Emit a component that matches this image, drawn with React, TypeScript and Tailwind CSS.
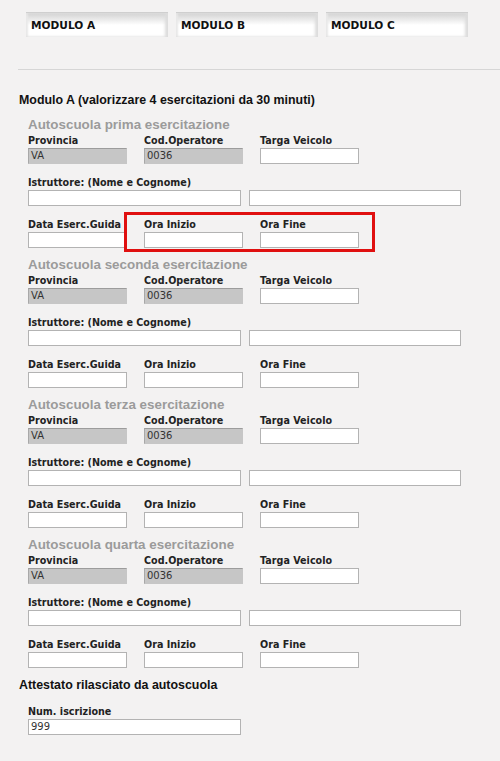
import React from 'react';

const labelCls = "block text-[9.6px] leading-[12px] font-bold text-[#222] font-['DejaVu_Sans',Verdana,sans-serif]";

function Field({ label, value, gray, w = "w-[99px]" }: { label?: string; value?: string; gray?: boolean; w?: string }) {
  return (
    <div className={w}>
      {label !== undefined && <span className={labelCls}>{label}</span>}
      <div
        className={
          "mt-[1px] h-[16px] px-[2px] text-[10px] leading-[14px] text-[#333] font-['DejaVu_Sans',Verdana,sans-serif] " +
          (gray
            ? "bg-[#c6c6c6] border border-[#c6c6c6] border-t-[#9c9c9c] border-l-[#a8a8a8]"
            : "bg-white border border-[#b3b3b3]")
        }
      >
        {value}
      </div>
    </div>
  );
}

function Section({ title, highlight }: { title: string; highlight?: boolean }) {
  return (
    <div className="h-[140px] pl-[28px]">
      <h3 className="h-[18px] text-[13.4px] leading-[18px] font-bold text-[#9b9b9b] font-['Liberation_Sans',Arial,sans-serif]">
        {title}
      </h3>
      <div className="mt-[1px] flex gap-[17px]">
        <Field label="Provincia" value="VA" gray />
        <Field label="Cod.Operatore" value="0036" gray />
        <Field label="Targa Veicolo" />
      </div>
      <div className="mt-[13px]">
        <span className={labelCls}>Istruttore: (Nome e Cognome)</span>
        <div className="flex gap-[8px]">
          <Field w="w-[213px]" />
          <Field w="w-[212px]" />
        </div>
      </div>
      <div className="relative mt-[13px] flex gap-[17px]">
        <Field label="Data Eserc.Guida" />
        <Field label="Ora Inizio" />
        <Field label="Ora Fine" />
        {highlight && (
          <div className="pointer-events-none absolute left-[96px] top-[-7px] h-[40px] w-[251px] border-[3px] border-[#e01010]" />
        )}
      </div>
    </div>
  );
}

export default function App() {
  const tabs = ["MODULO A", "MODULO B", "MODULO C"];
  return (
    <div className="min-h-[761px] w-[500px] bg-[#f3f2f2] overflow-hidden">
      <div className="flex gap-[8px] pl-[26px] pt-[12px]">
        {tabs.map((t) => (
          <div
            key={t}
            className="h-[25px] w-[142px] border-t border-[#cfcfcf] bg-linear-to-b from-[#d2d2d2] via-white via-50% to-white shadow-[inset_-3px_0_3px_#dcdcdc,inset_2px_0_2px_#e8e8e8] pl-[5px] text-[10.6px] leading-[25px] font-bold text-[#111] font-['DejaVu_Sans',Verdana,sans-serif]"
          >
            {t}
          </div>
        ))}
      </div>
      <div className="ml-[18px] mt-[32px] border-t border-[#d6d6d6]" />
      <h2 className="ml-[19px] mt-[22px] h-[16px] text-[12.4px] leading-[16px] font-bold text-[#111] font-['Liberation_Sans',Arial,sans-serif]">
        Modulo A (valorizzare 4 esercitazioni da 30 minuti)
      </h2>
      <div className="mt-[8px]">
        <Section title="Autoscuola prima esercitazione" highlight />
        <Section title="Autoscuola seconda esercitazione" />
        <Section title="Autoscuola terza esercitazione" />
        <Section title="Autoscuola quarta esercitazione" />
      </div>
      <h2 className="ml-[19px] mt-[1px] h-[16px] text-[12.4px] leading-[16px] font-bold text-[#111] font-['Liberation_Sans',Arial,sans-serif]">
        Attestato rilasciato da autoscuola
      </h2>
      <div className="ml-[28px] mt-[13px]">
        <Field label="Num. iscrizione" value="999" w="w-[213px]" />
      </div>
    </div>
  );
}
